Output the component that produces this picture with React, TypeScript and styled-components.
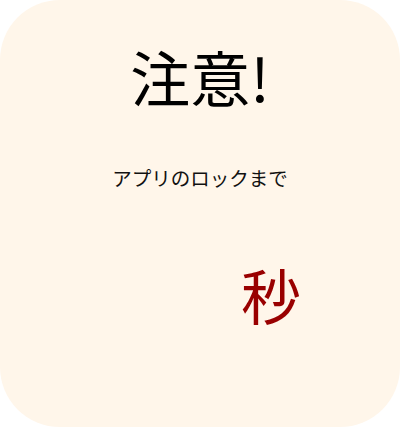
import React from "react";
import styled, { createGlobalStyle } from "styled-components";

const GlobalStyle = createGlobalStyle`
    html, body {
        margin: 0;
        padding: 0;
        background: #fff;
    }
    body {
        font-family: "Noto Sans CJK JP", "Noto Sans", sans-serif;
    }
`

const Card = styled.div`
    width: 400px;
    height: 427px;
    box-sizing: border-box;
    background-color: #fff6ea;
    border-radius: 60px;
    padding-top: 34px;
    display: flex;
    flex-direction: column;
    align-items: center;
`

const Title = styled.h1`
    margin: 0;
    font-size: 60px;
    font-weight: 400;
    line-height: 84px;
    color: #000;
`

const Message = styled.p`
    margin: 46px 0 0;
    font-size: 19.5px;
    line-height: 28px;
    color: #111;
`

const Countdown = styled.div`
    margin-top: 60px;
    display: flex;
    align-items: baseline;
    justify-content: center;
    gap: 4px;
`

const Count = styled.span`
    display: inline-block;
    min-width: 138px;
    font-size: 60px;
    line-height: 84px;
    color: #990000;
`

const Unit = styled.span`
    font-size: 60px;
    line-height: 84px;
    color: #990000;
`

export default function App() {
    return (
        <>
            <GlobalStyle />
            <Card>
                <Title>注意!</Title>
                <Message>アプリのロックまで</Message>
                <Countdown>
                    <Count></Count>
                    <Unit>秒</Unit>
                </Countdown>
            </Card>
        </>
    )
}
